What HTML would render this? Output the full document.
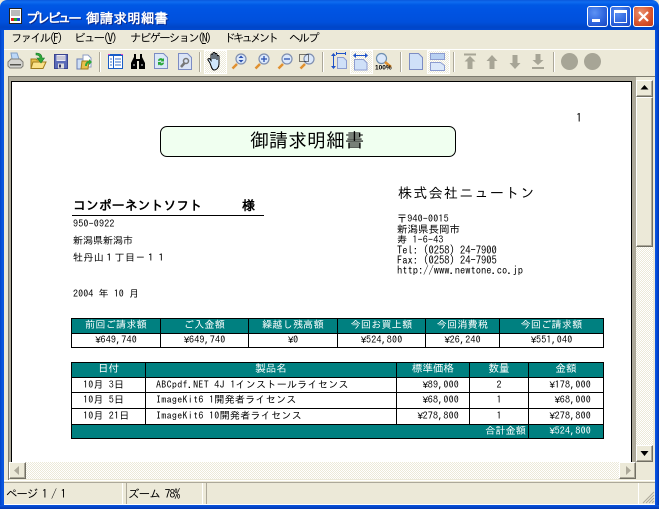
<!DOCTYPE html>
<html lang="ja">
<head>
<meta charset="utf-8">
<style>
html,body{margin:0;padding:0;background:#ece9d8}
#w{position:relative;width:659px;height:509px;overflow:hidden;background:#ece9d8;font-family:"Liberation Sans","IPAGothic",sans-serif}
.a{position:absolute}
.t{position:absolute;white-space:pre;font-family:"IPAGothic","Noto Sans CJK JP",monospace;color:#000;font-size:10px;line-height:14px;height:14px}
.m{font-size:11.500px;top:31px;color:#000;line-height:15px;height:15px}
.m u{text-decoration:underline}
.y{font-family:"Liberation Mono",monospace;letter-spacing:-.6px}
.c{text-align:center}
.r{text-align:right}
.h{color:#fff}
.d{position:absolute;background:#000}
.sep{position:absolute;top:52px;width:1px;height:20px;background:#aca899;box-shadow:1px 0 0 #fff}
.btn{position:absolute;top:50px;width:21px;height:22px;border:1px solid #fff;background-color:#f4f2e8;background-image:repeating-conic-gradient(#ece9d8 0 25%,#fff 0 50%);background-size:2px 2px}
.sb{position:absolute;background:#ece9d8;border:1px solid;border-color:#fff #716f64 #716f64 #fff;box-shadow:inset -1px -1px 0 #aca899;box-sizing:border-box}
.dither{position:absolute;background-image:repeating-conic-gradient(#ece9d8 0 25%,#fff 0 50%);background-size:2px 2px}
svg{position:absolute;overflow:visible}
</style>
</head>
<body>
<div id="w">

<!-- window frame -->
<div class="a" style="left:0;top:0;width:659px;height:30px;border-radius:7px 7px 0 0;background:linear-gradient(#0a58dc 0,#0f6cf0 2px,#0058e4 5px,#0054e3 10px,#0050dc 22px,#0046c8 27px,#0048d0 30px)"></div>
<div class="a" style="left:0;top:30px;width:4px;height:479px;background:linear-gradient(90deg,#0041c8,#0855dd 2px,#0a55e0)"></div>
<div class="a" style="left:655px;top:30px;width:4px;height:479px;background:linear-gradient(90deg,#0a55e0,#0048d8 2px,#0036b0)"></div>
<div class="a" style="left:0;top:505px;width:659px;height:4px;background:linear-gradient(#0a55e0,#0036b0)"></div>

<!-- title icon -->
<svg style="left:8px;top:8px" width="16" height="16" viewBox="0 0 16 16">
<rect x="1.500" y=".5" width="12" height="15" fill="#fff" stroke="#222"/>
<path d="M3 3h9M3 5h9M3 7h9" stroke="#777" stroke-width="1"/>
<rect x="3" y="10" width="3" height="3" fill="#d22"/><rect x="6" y="10" width="3" height="3" fill="#2a2"/><rect x="9" y="10" width="3" height="3" fill="#24c"/>
</svg>
<div class="t" style="left:26px;top:10px;font-size:13.500px;line-height:16px;height:16px;font-weight:bold;color:#fff;text-shadow:1px 1px 0 #0a2a90;letter-spacing:-2.900px;font-family:'IPAGothic','Noto Sans CJK JP',sans-serif">プレビュー</div>
<div class="t" style="left:86px;top:10px;font-size:13.500px;line-height:16px;height:16px;font-weight:bold;color:#fff;text-shadow:1px 1px 0 #0a2a90;letter-spacing:.2px;font-family:'IPAGothic','Noto Sans CJK JP',sans-serif">御請求明細書</div>

<!-- caption buttons -->
<div class="a" style="left:587px;top:6px;width:21px;height:21px;box-sizing:border-box;border:1px solid #fff;border-radius:3px;background:radial-gradient(circle at 35% 30%,#5d92f4,#2b62dc 60%,#1a47c0)"></div>
<div class="a" style="left:592px;top:19px;width:8px;height:3px;background:#fff"></div>
<div class="a" style="left:610px;top:6px;width:21px;height:21px;box-sizing:border-box;border:1px solid #fff;border-radius:3px;background:radial-gradient(circle at 35% 30%,#5d92f4,#2b62dc 60%,#1a47c0)"></div>
<div class="a" style="left:614px;top:10px;width:13px;height:13px;box-sizing:border-box;border:1px solid #fff;border-top-width:3px"></div>
<div class="a" style="left:633px;top:6px;width:21px;height:21px;box-sizing:border-box;border:1px solid #fff;border-radius:3px;background:radial-gradient(circle at 35% 30%,#ea9270,#d8522c 60%,#c03a18)"></div>
<svg style="left:633px;top:6px" width="21" height="21"><path d="M6 6l9 9M15 6l-9 9" stroke="#fff" stroke-width="2.2"/></svg>

<!-- menu -->
<div class="t m" style="left:11px;letter-spacing:-1.900px">ファイル(<u>F</u>)</div>
<div class="t m" style="left:74px;letter-spacing:-1.700px">ビュー(<u>V</u>)</div>
<div class="t m" style="left:130px;letter-spacing:-1.800px">ナビゲーション(<u>N</u>)</div>
<div class="t m" style="left:224px;letter-spacing:-2.800px">ドキュメント</div>
<div class="t m" style="left:289px;letter-spacing:-2px">ヘルプ</div>

<!-- toolbar -->
<div class="a" style="left:4px;top:49px;width:651px;height:1px;background:#fff"></div>
<div class="sep" style="left:99px"></div>
<div class="sep" style="left:199px"></div>
<div class="sep" style="left:322px"></div>
<div class="sep" style="left:400px"></div>
<div class="sep" style="left:453px"></div>
<div class="sep" style="left:553px"></div>
<div class="btn" style="left:204px"></div>
<div class="btn" style="left:350px"></div>
<div class="btn" style="left:427px"></div>

<!-- printer -->
<svg style="left:7px;top:52px" width="17" height="18" viewBox="0 0 17 18">
<path d="M4 1h6l2 6H5z" fill="#bcd8f8" stroke="#7f9fc5"/>
<path d="M1 10l3-3h9l3 3v4l-2 2H3l-2-2z" fill="#d4d4d0" stroke="#807f78"/>
<path d="M3 12h11v1.500H3z" fill="#55554f"/>
</svg>
<!-- open folder -->
<svg style="left:30px;top:52px" width="17" height="18" viewBox="0 0 17 18">
<path d="M1 7h5l1 1h5v8H1z" fill="#e8c04c" stroke="#a07c1c"/>
<path d="M3 10h13l-3 6.500H1z" fill="#fbe28a" stroke="#a07c1c"/>
<path d="M6 1c4 0 6 2 6 5h2.500l-3.500 5-4-5h3c0-2-2-3-4-3z" fill="#2fa83a" stroke="#1a7a28" stroke-width=".6"/>
</svg>
<!-- disk -->
<svg style="left:54px;top:54px" width="14" height="15" viewBox="0 0 14 15">
<path d="M.5.500h13v14H.5z" fill="#5a6ab8" stroke="#3b4590"/>
<rect x="2.500" y="1" width="9" height="6" fill="#e8e8f4"/>
<path d="M3 3h8M3 5h8" stroke="#aab" />
<rect x="4" y="9.500" width="6" height="5" fill="#ddd"/><rect x="5" y="10.500" width="2" height="3" fill="#336"/>
</svg>
<!-- folder pages -->
<svg style="left:76px;top:53px" width="17" height="17" viewBox="0 0 17 17">
<path d="M1 6h6v10H1z" fill="#cfe0f6" stroke="#6c7fb5"/>
<path d="M7 2h5l3 3v9H7z" fill="#fff" stroke="#8c9cc4"/>
<path d="M6 8h7l-1 8H5z" fill="#e8c04c" stroke="#a07c1c"/>
<path d="M9 13c0-3 2-5 4-5V6l3 3-3 3v-2c-1 0-2 1-2 3z" fill="#2fa83a"/>
</svg>
<!-- table -->
<svg style="left:108px;top:54px" width="15" height="15" viewBox="0 0 15 15">
<rect x=".5" y=".5" width="14" height="14" fill="#fff" stroke="#1a5ec8"/>
<rect x="0" y="0" width="15" height="2" fill="#1a5ec8"/>
<rect x="5" y="2" width="1" height="12" fill="#1a5ec8"/>
<path d="M2 5h2M2 8h2M2 11h2M7 5h6M7 8h6M7 11h6" stroke="#3a70c8"/>
<rect x="0" y="0" width="2" height="1" fill="#e040c0"/><rect x="13" y="0" width="2" height="1" fill="#e040c0"/>
</svg>
<!-- binoculars -->
<svg style="left:130px;top:54px" width="16" height="15" viewBox="0 0 16 15">
<path d="M4 0h2v5h4V0h2v3l3 6v6H9V7H7v8H1V9l3-6z" fill="#000"/>
<path d="M3 10h2v2H3zM11 10h2v2h-2z" fill="#777"/>
</svg>
<!-- refresh page -->
<svg style="left:154px;top:53px" width="14" height="16" viewBox="0 0 14 16">
<path d="M.5.500h9l4 4v11H.5z" fill="#dbe8f8" stroke="#7c8cc4"/>
<path d="M4 7.500a3 3 0 0 1 5-1.500l1-1v3.500H6.500l1-1a1.800 1.800 0 0 0-2.500.8zM10 10a3 3 0 0 1-5 1.500l-1 1V9h3.500l-1 1a1.800 1.800 0 0 0 2.500-.8z" fill="#2aa83a"/>
</svg>
<!-- page tool -->
<svg style="left:178px;top:53px" width="14" height="17" viewBox="0 0 14 17">
<path d="M.5.500h9l4 4v12H.5z" fill="#dbe4f6" stroke="#7c8cc4"/>
<circle cx="8" cy="8" r="2.500" fill="none" stroke="#777" stroke-width="1.500"/>
<path d="M6.500 10L3 14" stroke="#777" stroke-width="2.500"/>
</svg>
<!-- hand -->
<svg style="left:207px;top:52px" width="17" height="19" viewBox="0 0 17 19">
<path d="M3 11L1 8c-.6-1 1-2 2-1l1 1.500V3c0-1.300 2-1.300 2 0v4-5.500c0-1.300 2-1.300 2 0V7V2.500c0-1.300 2-1.300 2 0V8V4.500c0-1.300 2-1.300 2 0V12c0 3-2 6-5 6H7c-2 0-3-4-4-7z" fill="#cfe6fb" stroke="#000" stroke-width="1"/>
</svg>
<!-- zoom icons -->
<svg style="left:231px;top:53px" width="16" height="17" viewBox="0 0 16 17">
<path d="M1.500 15.500L6 11" stroke="#e09030" stroke-width="2.500"/>
<circle cx="10" cy="6" r="5" fill="#dbe8fb" stroke="#7f8fb0" stroke-width="1.200"/>
<path d="M10 2.500l2.500 2.500h-5zM10 9.500l2.500-2.500h-5z" fill="#2a50b0"/>
</svg>
<svg style="left:254px;top:53px" width="16" height="17" viewBox="0 0 16 17">
<path d="M1.500 15.500L6 11" stroke="#e09030" stroke-width="2.500"/>
<circle cx="10" cy="6" r="5" fill="#dbe8fb" stroke="#7f8fb0" stroke-width="1.200"/>
<path d="M7 6h6M10 3v6" stroke="#2a50b0" stroke-width="1.300"/>
</svg>
<svg style="left:277px;top:53px" width="16" height="17" viewBox="0 0 16 17">
<path d="M1.500 15.500L6 11" stroke="#e09030" stroke-width="2.500"/>
<circle cx="10" cy="6" r="5" fill="#dbe8fb" stroke="#7f8fb0" stroke-width="1.200"/>
<path d="M7 6h6" stroke="#2a50b0" stroke-width="1.300"/>
</svg>
<svg style="left:299px;top:53px" width="16" height="17" viewBox="0 0 16 17">
<path d="M1.500 15.500L6 11" stroke="#e09030" stroke-width="2.500"/>
<circle cx="10" cy="6" r="5" fill="#dbe8fb" stroke="#7f8fb0" stroke-width="1.200"/>
<rect x=".5" y="1.500" width="9" height="7" fill="none" stroke="#000" stroke-dasharray="1 1"/>
</svg>
<!-- fit height -->
<svg style="left:331px;top:52px" width="16" height="18" viewBox="0 0 16 18">
<path d="M2.500 3v13" stroke="#1f52c8"/><path d="M0 4l2.500-3L5 4zM0 14l2.500 3L5 14z" fill="#1f52c8"/>
<path d="M6.500 5.500h6l3 3v8h-9z" fill="#cfe0f8" stroke="#8c9cd0"/>
<path d="M5.500 1.500h9M5.500 0v3M14.500 0v3" stroke="#1f52c8"/>
</svg>
<!-- fit width -->
<svg style="left:353px;top:53px" width="15" height="18" viewBox="0 0 15 18">
<path d="M1 2.500h13" stroke="#1f52c8"/><path d="M3 0L0 2.500 3 5zM12 0l3 2.500L12 5z" fill="#1f52c8"/>
<path d="M1.500 6.500h9l3.500 3.500v7H1.500z" fill="#cfe0f8" stroke="#8c9cd0"/>
</svg>
<!-- 100% -->
<svg style="left:375px;top:53px" width="18" height="17" viewBox="0 0 18 17">
<circle cx="6.500" cy="5.500" r="5" fill="#dbe8fb" stroke="#6f8fb0" stroke-width="1.200"/>
<path d="M10 9l6 5" stroke="#e09030" stroke-width="2.500"/>
<text x="0" y="16.500" font-family="Liberation Sans" font-size="6.500" font-weight="bold" fill="#000">100%</text>
</svg>
<!-- single page -->
<svg style="left:409px;top:53px" width="14" height="17" viewBox="0 0 14 17">
<path d="M.5.500h9l4 4v12H.5z" fill="#cfe0f8" stroke="#7c8cc4"/>
</svg>
<!-- two pages -->
<svg style="left:430px;top:53px" width="16" height="18" viewBox="0 0 16 18">
<rect x=".5" y=".5" width="14" height="6" fill="#b8d0f2" stroke="#8c9cd0"/>
<path d="M.5 9.500h10l4 3v5H.5z" fill="#dbe8fa" stroke="#8c9cd0"/>
</svg>
<!-- nav arrows disabled -->
<svg style="left:463px;top:53px" width="14" height="17" viewBox="0 0 14 17"><path d="M1 .5h12v2H1zM7 3l5.500 5.500H9.500V16h-5V8.500h-3z" fill="#a7a596"/></svg>
<svg style="left:486px;top:55px" width="12" height="14" viewBox="0 0 12 14"><path d="M6 0l5.500 6H8.500v8h-5V6H.5z" fill="#a7a596"/></svg>
<svg style="left:509px;top:55px" width="12" height="14" viewBox="0 0 12 14"><path d="M6 14L.5 8h3V0h5v8h3z" fill="#a7a596"/></svg>
<svg style="left:531px;top:54px" width="14" height="16" viewBox="0 0 14 16"><path d="M7 11L1.500 6h3V0h5v6h3zM1 13h12v2H1z" fill="#a7a596"/></svg>
<div class="a" style="left:561px;top:53px;width:17px;height:17px;border-radius:50%;background:#a7a596"></div>
<div class="a" style="left:584px;top:53px;width:17px;height:17px;border-radius:50%;background:#a7a596"></div>

<!-- client frame -->
<div class="a" style="left:8px;top:76px;width:647px;height:1px;background:#7d7b6f"></div>
<div class="a" style="left:8px;top:76px;width:1px;height:404px;background:#7d7b6f"></div>
<div class="a" style="left:9px;top:77px;width:627px;height:5px;background:#aca899"></div>
<div class="a" style="left:9px;top:77px;width:3px;height:385px;background:#aca899"></div>
<div class="a" style="left:632px;top:77px;width:4px;height:385px;background:#aca899"></div>
<div class="a" style="left:11px;top:81px;width:621px;height:1px;background:#000"></div>
<div class="a" style="left:11px;top:81px;width:1px;height:381px;background:#000"></div>
<div class="a" style="left:631px;top:81px;width:1px;height:381px;background:#000"></div>
<div class="a" style="left:12px;top:82px;width:619px;height:380px;background:#fff"></div>

<!-- vertical scrollbar -->
<div class="dither" style="left:636px;top:80px;width:17px;height:382px"></div>
<div class="sb" style="left:636px;top:80px;width:17px;height:17px"></div>
<svg style="left:640px;top:85px" width="9" height="5"><path d="M4.500 0L8.500 4.500H.5z" fill="#000"/></svg>
<div class="sb" style="left:636px;top:97px;width:17px;height:150px"></div>
<div class="sb" style="left:636px;top:445px;width:17px;height:17px"></div>
<svg style="left:640px;top:451px" width="9" height="5"><path d="M4.500 5L8.500 0H.5z" fill="#000"/></svg>

<!-- horizontal scrollbar -->
<div class="dither" style="left:9px;top:462px;width:627px;height:17px"></div>
<div class="sb" style="left:9px;top:462px;width:17px;height:17px"></div>
<svg style="left:14px;top:466px" width="6" height="9"><path d="M0 4.500L5 0v9z" fill="#aca899"/></svg>
<div class="sb" style="left:619px;top:462px;width:17px;height:17px"></div>
<svg style="left:626px;top:466px" width="6" height="9"><path d="M5 4.500L0 0v9z" fill="#aca899"/></svg>

<!-- status bar -->
<div class="a" style="left:4px;top:480px;width:651px;height:1px;background:#fff"></div>
<div class="a" style="left:4px;top:482px;width:651px;height:1px;background:#aca899"></div>
<div class="a" style="left:122px;top:483px;width:1px;height:21px;background:#fff"></div>
<div class="a" style="left:126px;top:483px;width:1px;height:21px;background:#aca899"></div>
<div class="a" style="left:202px;top:483px;width:1px;height:21px;background:#fff"></div>
<div class="a" style="left:206px;top:483px;width:1px;height:21px;background:#aca899"></div>
<div class="a" style="left:638px;top:483px;width:1px;height:21px;background:#fff"></div>
<div class="a" style="left:4px;top:504px;width:651px;height:1px;background:#fff"></div>
<svg style="left:642px;top:491px" width="13" height="13"><path d="M12 1L1 12M12 4L4 12M12 7L7 12M12 10l-2 2" stroke="#aca899" stroke-width="1"/></svg>
<div class="t" style="left:6px;top:487px;font-size:11.500px;line-height:15px;height:15px;letter-spacing:-1.100px">ページ 1 / 1</div>
<div class="t" style="left:128px;top:487px;font-size:11.500px;line-height:15px;height:15px;letter-spacing:-.9px">ズーム 78%</div>

<!-- report -->
<div class="t" style="left:576px;top:111px;font-size:12px">1</div>

<div class="a" style="left:160px;top:126px;width:296px;height:31px;box-sizing:border-box;border:1px solid #000;border-radius:7px;background:#f0fff0"></div>
<div class="t" style="left:250px;top:130px;font-size:19px;line-height:22px;height:22px">御請求明細書</div>

<div class="t" style="left:73px;top:199px;font-size:13px;font-weight:bold;letter-spacing:-.1px">コンポーネントソフト</div>
<div class="t" style="left:242px;top:199px;font-size:13px;font-weight:bold">様</div>
<div class="a" style="left:72px;top:215px;width:192px;height:1px;background:#000"></div>
<div class="t" style="left:73px;top:217px;font-size:10px;letter-spacing:.2px">950-0922</div>
<div class="t" style="left:73px;top:234px;font-size:10px">新潟県新潟市</div>
<div class="t" style="left:73px;top:251px;font-size:10px;letter-spacing:.4px">牡丹山１丁目－１１</div>
<div class="t" style="left:73px;top:287px;font-size:10px;letter-spacing:.1px">2004 年 10 月</div>

<div class="t" style="left:398px;top:185px;font-size:14px;line-height:16px;height:16px;letter-spacing:1.300px">株式会社ニュートン</div>
<div class="t" style="left:397px;top:212px;font-size:10px;letter-spacing:.2px">〒940-0015</div>
<div class="t" style="left:397px;top:223px;font-size:10.500px">新潟県長岡市</div>
<div class="t" style="left:397px;top:233px;font-size:10px;letter-spacing:.2px">寿 1-6-43</div>
<div class="t" style="left:397px;top:244px;font-size:10.500px">Tel: (0258) 24-7900</div>
<div class="t" style="left:397px;top:254px;font-size:10.500px">Fax: (0258) 24-7905</div>
<div class="t" style="left:397px;top:264px;font-size:10.500px">http://www.newtone.co.jp</div>

<!-- table 1 -->
<div class="a" style="left:71px;top:318px;width:532px;height:15px;background:#008080"></div>
<div class="d" style="left:71px;top:318px;width:533px;height:1px"></div>
<div class="d" style="left:71px;top:333px;width:533px;height:1px"></div>
<div class="d" style="left:71px;top:347px;width:533px;height:1px"></div>
<div class="d" style="left:71px;top:318px;width:1px;height:30px"></div>
<div class="d" style="left:160px;top:318px;width:1px;height:30px"></div>
<div class="d" style="left:248px;top:318px;width:1px;height:30px"></div>
<div class="d" style="left:337px;top:318px;width:1px;height:30px"></div>
<div class="d" style="left:425px;top:318px;width:1px;height:30px"></div>
<div class="d" style="left:499px;top:318px;width:1px;height:30px"></div>
<div class="d" style="left:603px;top:318px;width:1px;height:30px"></div>
<div class="t c h" style="left:72px;width:88px;top:318px;font-size:10px;letter-spacing:.3px">前回ご請求額</div>
<div class="t c h" style="left:161px;width:87px;top:318px;font-size:10px;letter-spacing:.3px">ご入金額</div>
<div class="t c h" style="left:249px;width:88px;top:318px;font-size:10px;letter-spacing:.3px">繰越し残高額</div>
<div class="t c h" style="left:338px;width:87px;top:318px;font-size:10px;letter-spacing:.3px">今回お買上額</div>
<div class="t c h" style="left:426px;width:73px;top:318px;font-size:10px;letter-spacing:.3px">今回消費税</div>
<div class="t c h" style="left:500px;width:103px;top:318px;font-size:10px;letter-spacing:.3px">今回ご請求額</div>
<div class="t c" style="left:72px;width:88px;top:333px;letter-spacing:.2px"><span class="y">¥</span>649,740</div>
<div class="t c" style="left:161px;width:87px;top:333px;letter-spacing:.2px"><span class="y">¥</span>649,740</div>
<div class="t c" style="left:249px;width:88px;top:333px;letter-spacing:.2px"><span class="y">¥</span>0</div>
<div class="t c" style="left:338px;width:87px;top:333px;letter-spacing:.2px"><span class="y">¥</span>524,800</div>
<div class="t c" style="left:426px;width:73px;top:333px;letter-spacing:.2px"><span class="y">¥</span>26,240</div>
<div class="t c" style="left:500px;width:103px;top:333px;letter-spacing:.2px"><span class="y">¥</span>551,040</div>

<!-- table 2 -->
<div class="a" style="left:71px;top:362px;width:532px;height:15px;background:#008080"></div>
<div class="a" style="left:71px;top:424px;width:532px;height:14px;background:#008080"></div>
<div class="d" style="left:71px;top:362px;width:533px;height:1px"></div>
<div class="d" style="left:71px;top:377px;width:533px;height:1px"></div>
<div class="d" style="left:71px;top:392px;width:533px;height:1px"></div>
<div class="d" style="left:71px;top:408px;width:533px;height:1px"></div>
<div class="d" style="left:71px;top:424px;width:533px;height:1px"></div>
<div class="d" style="left:71px;top:438px;width:533px;height:1px"></div>
<div class="d" style="left:71px;top:362px;width:1px;height:77px"></div>
<div class="d" style="left:145px;top:362px;width:1px;height:62px"></div>
<div class="d" style="left:396px;top:362px;width:1px;height:62px"></div>
<div class="d" style="left:469px;top:362px;width:1px;height:62px"></div>
<div class="d" style="left:528px;top:362px;width:1px;height:77px"></div>
<div class="d" style="left:603px;top:362px;width:1px;height:77px"></div>
<div class="t c h" style="left:72px;width:73px;top:362px;font-size:10.500px">日付</div>
<div class="t c h" style="left:146px;width:250px;top:362px;font-size:10.500px">製品名</div>
<div class="t c h" style="left:397px;width:72px;top:362px;font-size:10.500px">標準価格</div>
<div class="t c h" style="left:470px;width:58px;top:362px;font-size:10.500px">数量</div>
<div class="t c h" style="left:529px;width:74px;top:362px;font-size:10.500px">金額</div>

<div class="t" style="left:83px;top:378px;letter-spacing:.2px">10月 3日</div>
<div class="t" style="left:83px;top:393px;letter-spacing:.2px">10月 5日</div>
<div class="t" style="left:83px;top:409px;letter-spacing:.2px">10月 21日</div>
<div class="t" style="left:156px;top:378px;font-size:10px;letter-spacing:.3px">ABCpdf.NET 4J 1インストールライセンス</div>
<div class="t" style="left:156px;top:393px;font-size:10px;letter-spacing:.3px">ImageKit6 1開発者ライセンス</div>
<div class="t" style="left:156px;top:409px;font-size:10px;letter-spacing:.3px">ImageKit6 10開発者ライセンス</div>
<div class="t r" style="left:397px;width:62px;top:378px;letter-spacing:.2px"><span class="y">¥</span>89,000</div>
<div class="t r" style="left:397px;width:62px;top:393px;letter-spacing:.2px"><span class="y">¥</span>68,000</div>
<div class="t r" style="left:397px;width:62px;top:409px;letter-spacing:.2px"><span class="y">¥</span>278,800</div>
<div class="t c" style="left:470px;width:58px;top:378px">2</div>
<div class="t c" style="left:470px;width:58px;top:393px">1</div>
<div class="t c" style="left:470px;width:58px;top:409px">1</div>
<div class="t r" style="left:529px;width:62px;top:378px;letter-spacing:.2px"><span class="y">¥</span>178,000</div>
<div class="t r" style="left:529px;width:62px;top:393px;letter-spacing:.2px"><span class="y">¥</span>68,000</div>
<div class="t r" style="left:529px;width:62px;top:409px;letter-spacing:.2px"><span class="y">¥</span>278,800</div>
<div class="t r h" style="left:440px;width:86px;top:424px;letter-spacing:.2px">合計金額</div>
<div class="t r h" style="left:529px;width:62px;top:424px;letter-spacing:.2px"><span class="y">¥</span>524,800</div>

</div>
</body>
</html>
